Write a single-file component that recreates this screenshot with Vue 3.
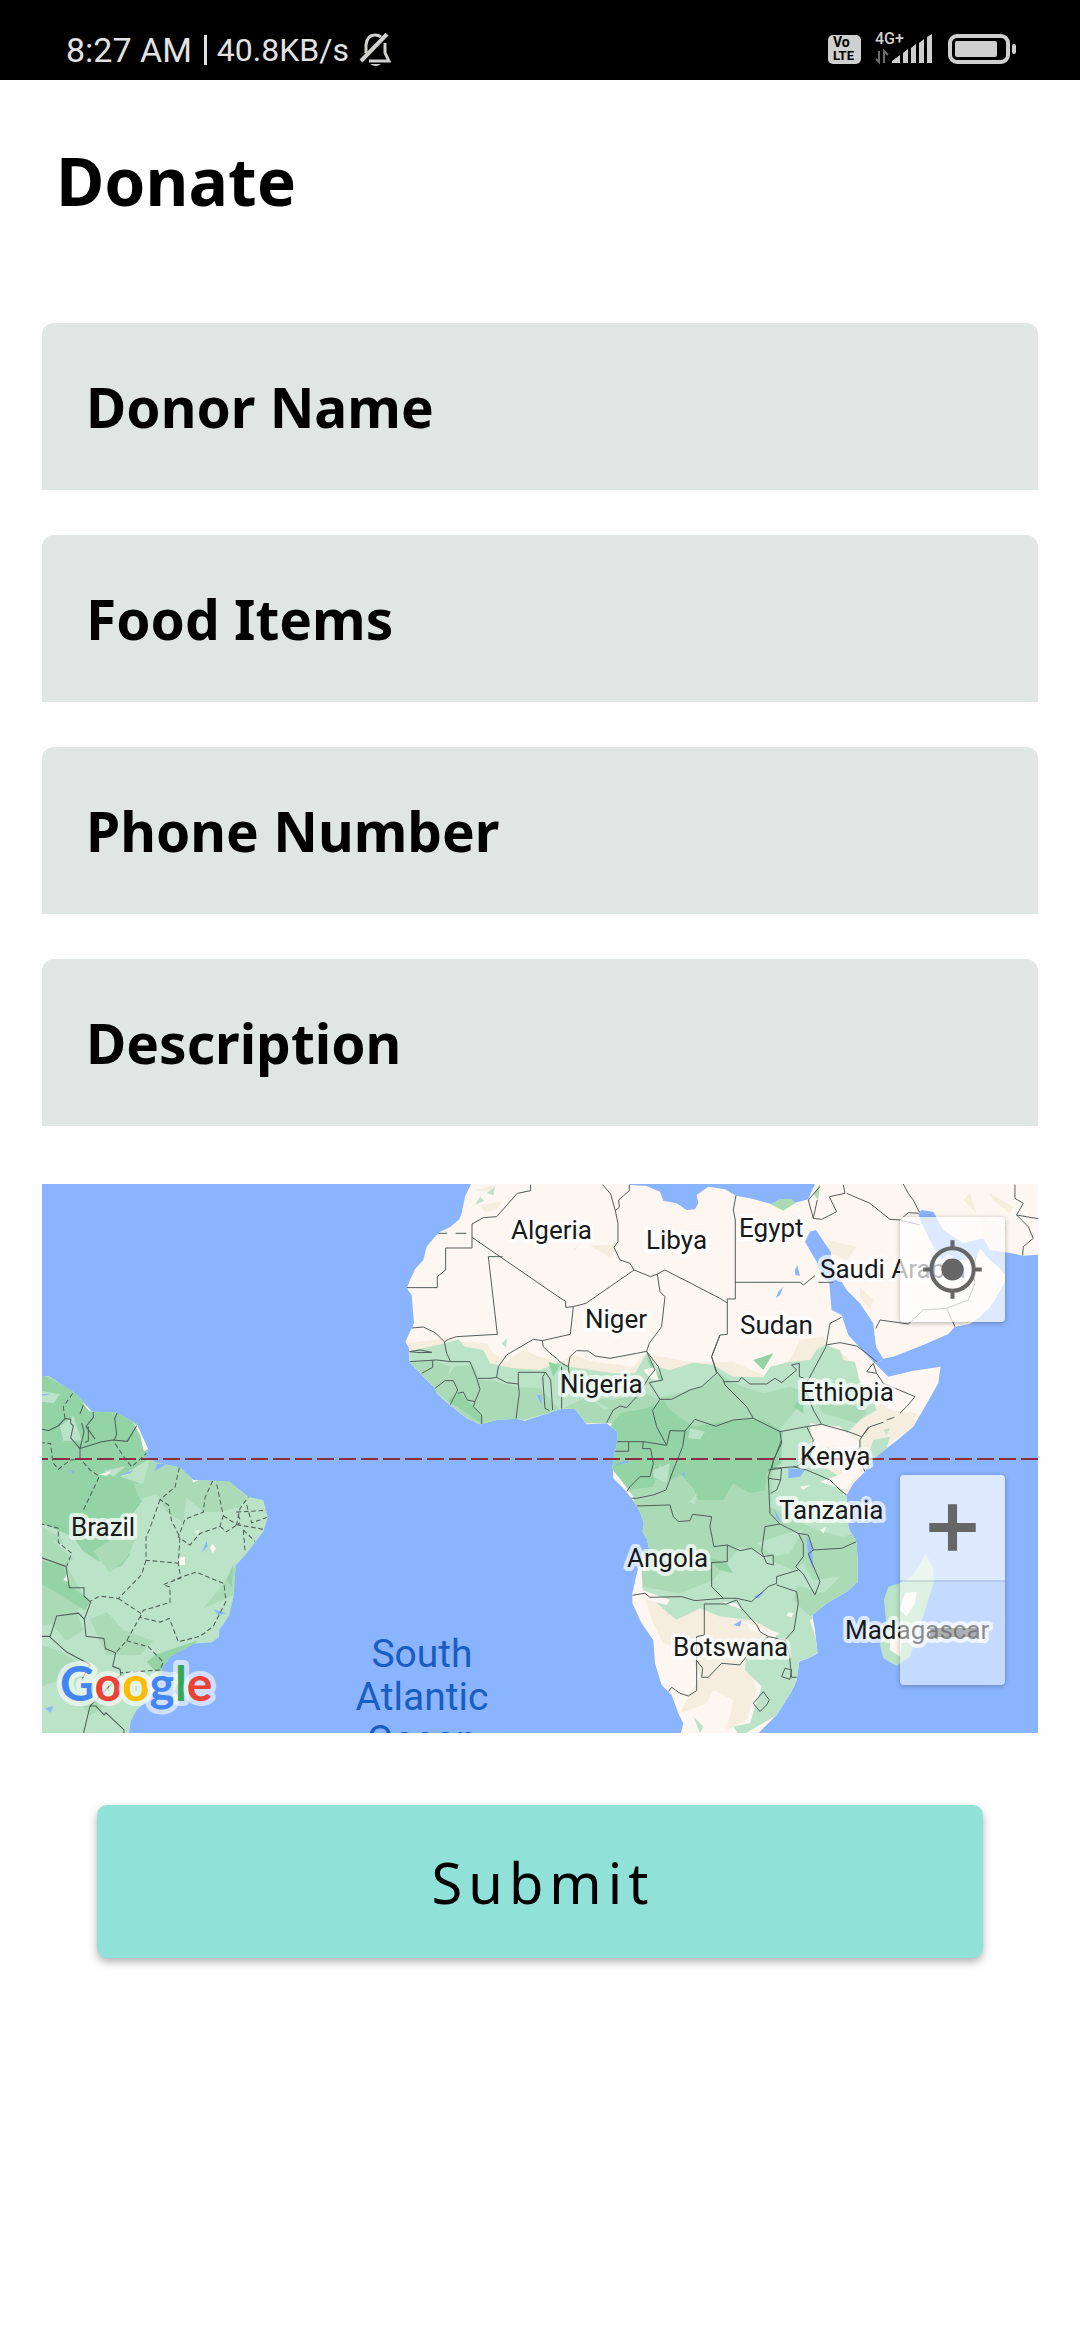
<script setup>
import { reactive } from 'vue'

const fields = [
  { id: 'donor', label: 'Donor Name', type: 'text' },
  { id: 'food', label: 'Food Items', type: 'text' },
  { id: 'phone', label: 'Phone Number', type: 'tel' },
  { id: 'description', label: 'Description', type: 'text' },
]
const form = reactive({ donor: '', food: '', phone: '', description: '' })

const countries = [
  { name: 'Algeria', x: 469, y: 55 },
  { name: 'Libya', x: 604, y: 65 },
  { name: 'Egypt', x: 697, y: 53 },
  { name: 'Saudi Arabia', x: 778, y: 94 },
  { name: 'Niger', x: 543, y: 144 },
  { name: 'Sudan', x: 698, y: 150 },
  { name: 'Nigeria', x: 518, y: 209 },
  { name: 'Ethiopia', x: 758, y: 217 },
  { name: 'Kenya', x: 758, y: 281 },
  { name: 'Tanzania', x: 737, y: 335 },
  { name: 'Angola', x: 585, y: 383 },
  { name: 'Botswana', x: 631, y: 472 },
  { name: 'Madagascar', x: 803, y: 455 },
  { name: 'Brazil', x: 29, y: 352 },
]
</script>

<template>
  <div class="screen">
    <div class="status">
      <div class="status-left">
        <span class="clock">8:27 AM</span>
        <span class="divider"></span>
        <span class="speed">40.8KB/s</span>
        <svg class="bell" width="32" height="34" viewBox="0 0 32 34" fill="none" stroke="#d0d2ce" stroke-width="3">
          <path d="M7 20V12Q8 2 16 2Q20 2 22 4M26 10V20L30 28H10" />
          <path d="M2 28L28 1" stroke-width="4" />
          <path d="M11 31H22Q17 35 11 31Z" fill="#d0d2ce" stroke="none" />
        </svg>
      </div>
      <svg class="status-right" width="190" height="40" viewBox="0 -6 190 40">
        <rect x="0" y="1" width="33" height="29" rx="5" fill="#cfcfcf" />
        <text x="5" y="13" font-size="14" font-weight="700" fill="#000">Vo</text>
        <text x="5" y="26" font-size="13" font-weight="700" fill="#000">LTE</text>
        <text x="47" y="10" font-size="16" font-weight="500" fill="#cfcfcf">4G+</text>
        <path d="M51 17V28L48 25M56 29V17L60 21" fill="none" stroke="#6c6c6c" stroke-width="2" />
        <path d="M64 29V27L72 21V29ZM75 29V19L80 15V29ZM83 29V14L88 10V29ZM91 29V9L96 5V29ZM99 29V3L104 0V29Z" fill="#cfcfcf" />
        <rect x="122" y="2" width="58" height="26" rx="7" fill="none" stroke="#cfcfcf" stroke-width="4" />
        <rect x="127" y="7" width="42" height="16" rx="2" fill="#cfcfcf" />
        <rect x="184" y="10" width="4" height="10" rx="2" fill="#cfcfcf" />
      </svg>
    </div>

    <main>
      <h1>Donate</h1>
      <form @submit.prevent>
        <div class="fields">
          <input
            v-for="f in fields"
            :id="f.id"
            :key="f.id"
            v-model="form[f.id]"
            :type="f.type"
            :placeholder="f.label"
            :aria-label="f.label"
          />
        </div>

        <div class="map">
          <svg class="map-art" viewBox="0 0 996 549" role="img" aria-label="Map">
            <defs>
              <clipPath id="africa">
                <path d="M277 0L272 14L255 50L245 100L238 118L210 142L180 155L165 170L140 200L130 240L105 268L90 300L80 325L95 345L102 430L90 455L76 485L88 505V545L120 578L165 625L170 640L210 675L260 715L300 733L350 720L410 716L435 722L545 686H585L620 733L680 730L712 755V785L700 840L698 860L700 895L735 930L765 970L780 995L792 1030L788 1055L802 1080L808 1110L775 1165L757 1240V1270L785 1330L820 1380L825 1450L845 1515L875 1545L895 1600L910 1630L900 1670H1125L1190 1605L1235 1535L1250 1500L1258 1445L1285 1435L1313 1420L1305 1350L1297 1305L1340 1270L1400 1235L1433 1205V1150L1430 1085L1408 1050L1402 1020L1400 945L1420 910L1455 875L1480 837L1520 805L1555 778L1600 740L1635 680L1675 610L1682 560L1600 572L1525 590L1490 555L1505 537L1540 530L1630 495L1705 462L1725 440L1770 432L1800 410L1830 382L1850 350L1875 305V285L1860 265L1830 240L1800 205L1790 232L1720 245L1680 235L1650 180L1625 130L1615 100L1625 90L1660 95L1690 150L1750 190L1810 175L1830 210L1895 220L1930 227L1990 223V0Z" />
              </clipPath>
              <clipPath id="brazil">
                <path d="M0 552L25 548L75 578L110 600L155 648L230 652L290 682L325 755L315 775L345 790L420 805L460 840L520 842L570 845L625 888L670 896L683 945L670 985L620 1045L587 1080L580 1170L567 1220L538 1260L537 1280L515 1295L462 1298L390 1335L365 1370L360 1400L330 1450L290 1485L272 1515L266 1560H0Z" />
              </clipPath>
            </defs>

            <rect width="996" height="549" fill="#8bb4ff" />

            <!-- South America -->
            <g transform="translate(-2 -4) scale(.3333 .3571)">
              <g clip-path="url(#brazil)">
                <rect width="700" height="1600" fill="#bbe3c7" />
                <path fill="#93d3a5" d="M0 540L100 590L160 640L240 640L310 700L330 780L240 830L300 850L305 900L260 960L270 1050L245 1080L215 1090L200 1040L170 1035L180 1070L130 1040L100 1000L0 960Z" />
                <path fill="#abdbb6" d="M330 780L420 800L530 840L570 845L620 888L600 915L540 930L490 930L440 890L430 960L380 930L350 880L300 895L280 850L310 850Z" />
                <path fill="#abdbb6" d="M0 970L60 1000L100 1060L80 1080L140 1180L90 1230L0 1250ZM590 1070L585 1160L490 1200L550 1130ZM150 1230L200 1210L250 1260L340 1290L300 1330L200 1330ZM0 1300L60 1320L130 1360L60 1400L0 1420ZM160 1040L210 1100L260 1060L290 1000L240 990ZM30 1240L110 1210L130 1260L80 1290ZM100 1440L200 1470L150 1500Z" />
                <path fill="#93d3a5" d="M0 1065L70 1080L85 1130L150 1180L135 1205L60 1160L0 1130ZM345 1330L470 1290L450 1320L380 1350L360 1390L320 1350ZM580 1075L560 1120L575 1140Z" />
                <path fill="#bbe3c7" d="M60 690L100 660L125 730H70ZM0 590L60 600L40 625L0 620ZM190 815L260 800L220 830ZM40 1010L100 1030L160 1080L110 1070Z" />
                <path fill="#fef6f0" d="M280 680L295 690L325 752L312 760L300 715ZM125 620L160 650L145 645ZM418 1055H435V1078H418ZM510 1030L518 1018L528 1032L518 1045ZM458 975L468 985L480 978L472 993ZM175 825L215 815L200 828ZM70 1120L85 1100V1125Z" />
                <path fill="#8bb4ff" d="M345 815L380 795L350 795ZM235 828L280 812L270 822ZM85 810L103 815L100 823ZM485 1045L500 1010L503 1025ZM520 1203L560 1213L535 1218ZM15 1480L40 1473L32 1492ZM0 600L35 598L10 604Z" />
                <path fill="#fef6f0" d="M450 820L460 825L475 840L460 848ZM50 555L58 545L65 560Z" />
                <g fill="none" stroke="#4f5d5a" stroke-width="3">
                  <path d="M0 696L25 702L55 688L75 668L92 670V682L100 688L92 722L120 752V780M120 752L185 733L220 728L262 732L290 688M232 652L224 668L230 712L222 730M160 650V665L138 690L165 725M130 630L120 655M125 680L132 705L120 752M145 690V730L135 735M0 1056L78 1082L88 1142H132V1165L152 1182L133 1230L138 1278L192 1284L196 1312L227 1324L218 1362L240 1370L243 1385L205 1420L150 1473L130 1551M133 1230L115 1213L50 1221L30 1280L80 1322L150 1357L125 1400M0 1278H30M150 1473H168L192 1498L198 1492L252 1540V1552" />
                  <path stroke-dasharray="14 8" d="M98 598L70 635L75 668M0 735L32 738L38 790L55 810L90 785L120 780L150 812L178 830L130 925M0 962L55 975L55 1015L95 1045L80 1082M225 738L255 780L275 803L320 765M418 805L405 860L360 895L385 910L395 955L420 1000L415 1075L422 1115L370 1133L390 1140V1183L310 1205L300 1225L360 1238L388 1228L415 1293L480 1278L520 1250L558 1180L552 1130L468 1098L400 1120M360 895L330 975L318 1000V1065L415 1073M318 1065L305 1105L235 1172L180 1165L150 1180M235 1172L305 1215L260 1290L227 1324M260 1290L325 1307L370 1350L360 1372L243 1380M518 842L495 890L490 930L435 950L415 1000L450 1022L480 990L540 970L550 940L530 850M550 940L590 965L600 920L625 888M590 965L670 978M620 910L635 960L680 945M600 950L590 930L680 925M610 980L645 1012M610 980L615 1037M540 970L560 985L600 960" />
                </g>
              </g>
            </g>

            <!-- Africa and Arabia -->
            <g transform="translate(338 -4) scale(.3333)">
              <g clip-path="url(#africa)">
                <rect width="2000" height="1700" fill="#fef6f0" />
                <path fill="#f5eedf" d="M80 490L195 475L240 485L320 490L340 520L380 545L430 510L480 530L540 545L580 525L640 545L760 560L790 525L850 530L940 548L1060 545L1150 585L1230 540L1260 480L1330 470L1350 500L1400 530L1440 600L1470 640L1530 690L1610 700L1600 740L1530 790L1450 870L1400 940L1300 900L1290 730L600 700L90 600ZM630 197L718 193L690 232ZM577 213L592 197L588 210ZM300 75L365 65L350 90L315 95ZM285 30L350 15L330 35ZM1340 180L1430 200L1400 240L1350 220ZM1440 320L1480 360L1470 390L1440 350ZM1750 60L1790 100L1770 40ZM1800 110L1880 140L1850 220L1810 170ZM1830 40L1900 80L1890 100L1840 60ZM790 1245L950 1270L1080 1290L1180 1360L1150 1400L1110 1460L1130 1530L1100 1620L1040 1650L1060 1560L1000 1530L980 1570L900 1600L920 1560L960 1490L930 1420L850 1390L820 1330Z" />
                <path fill="#bbe3c7" d="M80 515L195 490L235 478L255 500L310 510L330 550L400 565L480 570L540 545L570 560L700 580L765 580L800 520L830 560L870 570L940 548L1000 555L1060 590L1150 592L1170 560L1230 545L1290 540L1310 510L1335 495L1380 510L1390 540L1425 545L1440 610L1470 635L1490 690L1440 720L1390 770L1290 740L1300 840L1380 890L1390 945L1450 925V1250L1290 1320L1330 1450L1200 1600L1080 1670L1060 1640L1110 1630L1145 1520L1095 1470L1100 1420L1180 1400L1190 1360L1100 1310L1070 1270L960 1260L890 1320L790 1235L770 1165V900L690 720L580 690L300 750L80 570ZM1450 870L1480 780L1530 770L1510 840ZM1510 750L1530 745L1520 765ZM365 490L382 475L378 503ZM285 75L300 50L312 62ZM320 40L345 20L340 45Z" />
                <path fill="#abdbb6" d="M88 550L160 540L210 560L280 555L300 600L350 605L400 620L480 625L540 690L620 650L700 660L800 640L830 655L960 625L1020 580L1060 610L1150 640L1230 620L1290 640L1240 700L1190 760L1170 980L1230 1010L1310 1050L1390 1070L1450 1050V1200L1290 1310L1240 1260L1260 1180L1190 1150L1150 1120L1080 1100L1000 1200L780 1110L760 950L700 870V730H600L545 690L300 750L80 560ZM1290 640L1350 670L1440 610L1460 700L1430 730L1330 700ZM780 1110L1000 1200L900 1240L790 1220Z" />
                <path fill="#93d3a5" d="M690 740L720 700L800 685L850 660L870 690L940 740L1000 730L1060 720L1150 720L1210 755L1205 780V850L1160 880L1155 930L1110 940L1060 910L1030 960H955L940 925L905 885L870 900L840 850L820 920L750 930L690 860ZM200 660L240 640L300 700L310 735L260 700ZM800 530L850 600L820 590ZM1120 540L1180 520L1150 570ZM960 1120L1040 1150L1060 1180L1020 1170ZM730 880L790 870L780 920ZM505 545L540 555L520 590ZM1240 680L1270 640V700Z" />
                <path fill="#bbe3c7" d="M930 745L975 755L960 778L925 775ZM210 560L230 553L205 585ZM780 600L840 600L900 640L830 620ZM1130 1090L1220 1060L1270 1050L1230 1120L1180 1130ZM1200 1200L1270 1150L1300 1200L1380 1190L1330 1240ZM820 870L870 850L860 910L820 890ZM930 965L950 940L945 975ZM640 660L670 690L690 685Z" />
                <path fill="#fef6f0" d="M790 570L825 560L835 600L815 598ZM1290 730L1380 740L1440 790L1420 850L1370 800H1300ZM1260 920L1290 915L1270 930ZM1320 905L1390 880L1430 800L1440 880L1395 930ZM1310 965L1330 962L1320 990ZM1225 1297L1240 1300L1235 1312L1220 1308ZM1100 1330L1200 1360L1180 1370L1110 1350ZM1320 1050L1340 1040L1330 1060ZM765 1170L785 1165L787 1230L870 1260L860 1275L765 1250Z" />
                <path fill="#bbe3c7" d="M860 1300L910 1265L1010 1260L1090 1290L1110 1320L1020 1310L960 1285L900 1315ZM1110 1480L1130 1460L1125 1490ZM940 1610L970 1640L960 1660Z" />
                <path fill="#8bb4ff" d="M470 645H485V675ZM1225 865L1275 870L1260 890L1225 895ZM1170 940L1180 980L1205 1030L1190 1015ZM1280 1070L1295 1090L1300 1170L1285 1130ZM1060 1335L1085 1320L1080 1340ZM1120 1250L1155 1235L1135 1255ZM905 880L915 875L912 892ZM1245 270L1252 255L1260 287L1246 285ZM1188 355L1195 335L1210 320L1200 345ZM1238 102L1262 130L1255 125ZM700 855L745 840L740 850Z" />
                <path fill="#8bb4ff" d="M750 0V15L800 18L840 35L850 62L890 70L920 90L945 88L955 70L950 45L985 20L1035 28L1068 47L1110 55L1175 72L1210 80L1245 68L1285 58L1305 12V0Z" />
                <path fill="#abdbb6" d="M1172 73L1200 57H1235L1248 68L1210 92ZM1300 40L1320 12L1315 60Z" />
                <path fill="#8bb4ff" d="M1275 185L1290 155L1308 150L1352 215L1358 260L1400 330L1440 370L1480 430L1488 500L1510 537L1490 555L1460 525L1405 465L1385 405L1355 390L1348 310L1325 290L1310 245Z" />
                <g fill="none" stroke="#4f5d5a" stroke-width="3">
                  <path d="M452 14V32L412 40L350 110L310 113L276 132V204H197V270L172 290V323H80V338M276 172L545 357L557 363V382L580 380L618 370L762 270L750 250L720 240L702 202L714 185V130L706 92L692 42L668 14M706 92L718 82L716 60L748 32V14M368 230H325L352 463L230 470L205 478L195 485M580 380L571 463L487 482L460 478L402 512L380 525L355 560L350 592L330 595H293M95 444L130 441L165 458L193 485L200 520L212 545L170 540L88 545M88 515L120 518L155 517L120 510ZM158 542V562L125 580M165 625L195 602H220L233 630L210 675M212 545H270L290 595L300 628L285 665L262 660L250 636L233 640M285 665L280 680L305 705V733M350 592L380 608L415 612L418 640L408 716M415 612V577H497L488 590L495 685L508 692M497 577L512 600L518 690M487 482L490 500L510 520L530 535L545 550L565 560L570 530L590 512L625 513L645 528L690 535L770 520L800 514L808 490L845 440L855 350L840 335L832 282L812 290L762 270M832 282L855 270L1020 355L1042 369M545 560V686M565 560L570 600M680 728L700 690L720 678L740 683L770 650L790 620L808 590L825 570L800 514L835 560L848 600L808 608L840 658H875L930 630L965 620L1010 580L995 530L1020 465M840 658L818 692L830 740L860 796L790 785H710M860 796L870 752L915 753L945 718L1005 738H1010M915 753L908 800L880 870L858 930L820 945L770 955L745 955M746 785V814H705M790 785L788 806H812L820 850L810 890L780 890L750 920L740 935M1068 47L1060 90L1066 120V357H1042V463L1020 465L995 530L1010 575L1030 600L1035 615L1100 680L1120 715L1200 755L1205 790L1180 840L1175 870M1030 605L1075 605L1085 592L1110 612H1160L1185 595L1205 608L1250 570L1235 555L1258 550V590L1285 600L1338 500L1350 430L1385 412M1066 307H1260L1270 315L1305 287M1315 307H1360M1338 495L1380 488L1430 498L1460 520L1490 545M1460 575L1490 580L1480 550L1460 575M1490 580L1510 610L1605 650L1580 680L1560 700M1543 712L1520 720M1510 727L1470 740L1445 770L1405 755L1325 733L1300 690L1285 650L1270 620L1285 600M1120 715L1060 720L1010 738M1325 733L1280 740L1200 755M1280 740L1300 780L1290 830L1250 860L1180 865M1466 740L1440 780V840L1455 875M1240 860L1280 870L1350 900L1380 930L1400 945M1285 60L1300 115L1325 118L1370 95L1348 50L1395 40L1390 14M1285 60L1320 20M1300 115L1312 60M1400 40L1470 70L1530 118L1560 120L1620 135M1560 120L1585 98L1620 100L1600 60L1585 40L1570 12M1790 215L1780 280L1785 310L1765 360L1700 385L1630 390L1585 432L1500 420L1488 445M1700 385L1725 440M1905 14V55L1930 70L1910 105L1945 140L1960 175L1930 200L1928 227M1910 105L1950 112L1990 118" />
                  <path d="M770 978L870 975L880 1010L895 1025L930 1022L938 1003L995 1010L990 1040L1002 1100L1042 1095L1080 1112L1115 1105L1150 1130L1180 1125V1155L1160 1150L1145 1115L1155 1040L1200 1032L1255 1060L1270 1090V1130L1247 1160L1270 1182L1305 1245L1320 1205L1285 1122L1300 1110L1385 1105L1430 1085M1255 1060L1285 1065L1300 1110M1042 1095V1145L995 1148V1220L1030 1255L945 1262L905 1250L810 1252L795 1240L757 1246M1030 1255H1070L1115 1265L1165 1220L1190 1210V1190L1255 1170M1190 1215L1250 1235L1255 1270L1242 1350L1215 1380L1165 1370L1140 1355L1130 1335L1085 1285L1070 1260L1040 1272H973V1365L950 1370V1532L925 1548L900 1540L875 1522L865 1535M950 1442L968 1465L965 1492H985L1025 1450L1080 1455L1110 1415L1165 1370M1215 1380L1228 1420L1235 1492H1250M1215 1465L1235 1470L1230 1498L1205 1490ZM1120 1570L1150 1535L1168 1560L1160 1575L1140 1595ZM1205 780L1180 845L1165 890L1170 1000L1200 1032M1165 870L1205 865L1202 900L1165 895M1202 900L1190 930L1172 940" />
                  <path stroke-dasharray="32 25" d="M170 160H276" />
                </g>
              </g>
              <path fill="#bbe3c7" d="M1638 1122L1660 1165L1662 1205L1645 1260L1620 1340L1590 1430L1550 1458L1510 1435L1500 1395L1520 1340L1512 1260L1525 1220L1560 1210L1600 1185Z" />
              <path fill="#fef6f0" d="M1575 1240L1610 1235L1605 1270L1580 1310L1560 1290ZM1530 1370L1570 1350L1560 1430L1530 1410Z" />
            </g>

            <path d="M-11 275H996" stroke="#8a3045" stroke-width="2" stroke-dasharray="17 5" />

            <g class="country">
              <text v-for="c in countries" :key="c.name" :x="c.x" :y="c.y">{{ c.name }}</text>
            </g>
            <g class="ocean">
              <text x="380" y="483">South</text>
              <text x="380" y="526">Atlantic</text>
              <text x="380" y="569">Ocean</text>
            </g>
            <text class="logo" x="18" y="517"><tspan fill="#4285f4">G</tspan><tspan fill="#ea4335">o</tspan><tspan fill="#fbbc04">o</tspan><tspan fill="#4285f4">g</tspan><tspan fill="#34a853">l</tspan><tspan fill="#ea4335">e</tspan></text>
          </svg>

          <button type="button" class="locate" aria-label="My location">
            <svg viewBox="0 0 104 104" fill="none" stroke="#666">
              <circle cx="52" cy="52" r="21" stroke-width="4" />
              <circle cx="52" cy="52" r="11" fill="#666" stroke="none" />
              <path d="M52 23V32M52 72V81M23 52H32M72 52H81" stroke-width="4" />
            </svg>
          </button>
          <div class="zoom">
            <button type="button" class="zoom-in" aria-label="Zoom in">
              <svg viewBox="0 0 104 104"><path d="M52 29V75M29 52H75" stroke="#666" stroke-width="9" /></svg>
            </button>
            <button type="button" class="zoom-out" aria-label="Zoom out">
              <svg viewBox="0 0 104 104"><path d="M30 50H76" stroke="#666" stroke-opacity=".5" stroke-width="9" /></svg>
            </button>
          </div>
        </div>

        <button type="submit" class="submit">Submit</button>
      </form>
    </main>
  </div>
</template>

<style>
body {
  background: #fefefe;
}
</style>

<style scoped>
.screen {
  font-family: "Noto Sans", sans-serif;
  color: #000;
}
.status {
  display: flex;
  justify-content: space-between;
  align-items: flex-start;
  box-sizing: border-box;
  height: 80px;
  padding: 28px 62px 0 66px;
  background: #000;
  color: #e2e2e2;
  font-family: Roboto, sans-serif;
}
.status-left {
  display: flex;
  align-items: center;
  height: 44px;
}
.clock {
  font-size: 34px;
}
.divider {
  width: 3px;
  height: 30px;
  margin: 0 10px 0 12px;
  background: #e2e2e2;
}
.speed {
  font-size: 32px;
}
.bell {
  margin-left: 10px;
}
main {
  padding: 56px 42px 60px;
}
h1 {
  margin: 0 0 99px 14px;
  font-size: 66px;
  line-height: 88px;
  font-weight: 700;
}
.fields {
  display: flex;
  flex-direction: column;
  gap: 45px;
}
input {
  box-sizing: border-box;
  width: 100%;
  height: 167px;
  padding: 0 44px;
  border: 0;
  border-radius: 12px 12px 0 0;
  outline: 0;
  background: #e0e6e4;
  font: 700 55px "Noto Sans", sans-serif;
  color: #000;
}
input::placeholder {
  color: #000;
  opacity: 1;
}
.map {
  position: relative;
  margin-top: 58px;
}
.map-art {
  display: block;
  width: 100%;
  height: auto;
  font-family: Roboto, sans-serif;
}
.country {
  font-size: 26px;
  fill: #17191b;
  stroke: rgba(255, 255, 255, 0.7);
  stroke-width: 8px;
  stroke-linejoin: round;
  paint-order: stroke;
}
.ocean {
  font-size: 39px;
  fill: #1a5dc0;
  text-anchor: middle;
}
.logo {
  font: 700 48px Lato, sans-serif;
  stroke: rgba(255, 255, 255, 0.6);
  stroke-width: 10px;
  stroke-linejoin: round;
  paint-order: stroke;
}
.map button {
  display: block;
  width: 105px;
  height: 105px;
  padding: 0;
  border: 0;
  background: rgba(255, 255, 255, 0.7);
}
.map button svg {
  display: block;
}
.map .locate {
  position: absolute;
  top: 33px;
  right: 33px;
  border-radius: 4px;
  box-shadow: 0 1px 5px rgba(0, 0, 0, 0.3);
}
.zoom {
  position: absolute;
  right: 33px;
  bottom: 48px;
  border-radius: 4px;
  overflow: hidden;
  box-shadow: 0 1px 5px rgba(0, 0, 0, 0.3);
}
.map .zoom-out {
  border-top: 2px solid rgba(120, 140, 170, 0.2);
  background: rgba(255, 255, 255, 0.5);
}
.submit {
  display: block;
  width: calc(100% - 110px);
  height: 153px;
  margin: 72px auto 0;
  padding: 0;
  border: 0;
  border-radius: 10px;
  background: #90e1d7;
  box-shadow: 0 4px 8px rgba(0, 0, 0, 0.3);
  font: 400 56px "Noto Sans", sans-serif;
  letter-spacing: 6px;
  text-indent: 6px;
  color: #000;
}
</style>
